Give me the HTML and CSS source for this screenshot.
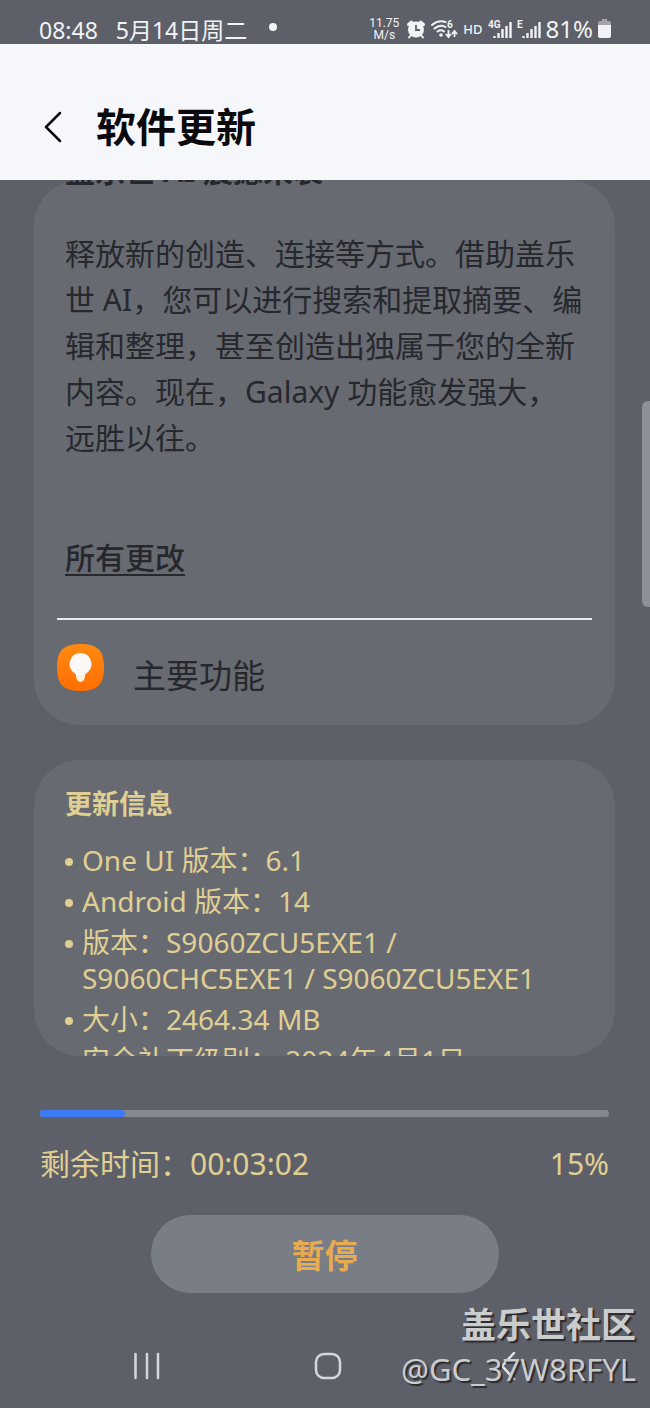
FILE: index.html
```html
<!DOCTYPE html>
<html lang="zh-CN">
<head>
    <meta charset="utf-8">
    <meta name="viewport" content="width=device-width, initial-scale=1">
    <title>软件更新</title>
    <link rel="stylesheet" href="styles.css">
</head>
<body>

    <div class="status-bar">
        <span class="clock">08:48</span>
        <span class="date">5月14日周二</span>
        <span class="dot"></span>
        <div class="status-icons">
            <span class="speed">11.75<br>M/s</span>
            <svg class="alarm" width="20" height="20" viewBox="0 0 20 20">
                <path d="M2.500 5.500L5.500 3M14.500 3l3 2.500" stroke="#f2f3f6" stroke-width="3" stroke-linecap="round"/>
                <path d="M5 16l-2 2.500M15 16l2 2.500" stroke="#f2f3f6" stroke-width="2" stroke-linecap="round"/>
                <circle cx="10" cy="10.500" r="8" fill="#f2f3f6"/>
                <path d="M10 6v5h4" fill="none" stroke="#5d6068" stroke-width="1.800"/>
            </svg>
            <svg class="wifi" width="27" height="24" viewBox="0 0 27 24">
                <g fill="none" stroke="#f2f3f6" stroke-width="2" stroke-linecap="round">
                    <path d="M1 8C5 4.500 10 3.500 14.500 5"/>
                    <path d="M3.500 11.500C7 8.500 11 8 14.500 10"/>
                    <path d="M6.500 14.500C8.500 13 11 13 13 14.500"/>
                </g>
                <path d="M17.500 13v6M15 17l2.500 3 2.500-3M23.500 20v-6M21 17l2.500-3 2.500 3" fill="none" stroke="#f2f3f6" stroke-width="1.800"/>
                <circle cx="10" cy="18" r="1.800" fill="#f2f3f6"/>
                <text class="signal-label" x="16" y="11">6</text>
            </svg>
            <span class="hd">HD</span>
            <svg class="signal" width="24" height="24" viewBox="0 0 24 24">
                <path d="M6.500 19v2M10.500 16v5M14.500 12v9M18.500 9v12M22.500 5v16" stroke="#f2f3f6" stroke-width="2.400"/>
                <text class="signal-label" x="0" y="11">4G</text>
            </svg>
            <svg class="signal" width="24" height="24" viewBox="0 0 24 24">
                <path d="M6.500 19v2M10.500 16v5M14.500 12v9M18.500 9v12M22.500 5v16" stroke="#f2f3f6" stroke-width="2.400"/>
                <text class="signal-label" x="0" y="11">E</text>
            </svg>
            <span class="battery-level">81%</span>
            <svg class="battery" width="13" height="20" viewBox="0 0 13 20">
                <path d="M4 0h5v2h2q2 0 2 2v3H0V4q0-2 2-2h2z" fill="#a3a5aa"/>
                <path d="M0 6h13v11q0 2-2 2H2q-2 0-2-2z" fill="#f2f3f6"/>
            </svg>
        </div>
    </div>

    <header class="header">
        <button class="back" type="button" aria-label="返回">
            <svg width="20" height="32" viewBox="0 0 20 32">
                <path d="M17 2L3 16l14 14" fill="none" stroke="#0a0a0c" stroke-width="2.500" stroke-linecap="round" stroke-linejoin="round"/>
            </svg>
        </button>
        <h1>软件更新</h1>
    </header>

    <main class="content">
        <section class="card features">
            <h2 class="features-title">盖乐世 AI 震撼来袭</h2>
            <p class="description">
                释放新的创造、连接等方式。借助盖乐<br>
                世 AI，您可以进行搜索和提取摘要、编<br>
                辑和整理，甚至创造出独属于您的全新<br>
                内容。现在，Galaxy 功能愈发强大，<br>
                远胜以往。
            </p>
            <h3 class="changes">所有更改</h3>
            <div class="feature-row">
                <svg width="47" height="47" viewBox="0 0 47 47">
                    <defs>
                        <linearGradient id="orange" x1="0" y1="0" x2="0" y2="1">
                            <stop offset="0" stop-color="#ff8a12"/>
                            <stop offset="1" stop-color="#ff6e02"/>
                        </linearGradient>
                    </defs>
                    <path d="M23.500 0C40 0 47 6 47 23.500S40 47 23.500 47 0 41 0 23.500 7 0 23.500 0z" fill="url(#orange)"/>
                    <path d="M19 29h9v3c0 3-2 6-4.500 6S19 35 19 32z" fill="#ffeed8"/>
                    <path d="M23.500 9a11 11 0 0 1 7.500 19c-2 1.500-3 2-3 3.500h-9c0-1.500-1-2-3-3.500A11 11 0 0 1 23.500 9z" fill="#fbf8f5"/>
                </svg>
                <span>主要功能</span>
            </div>
        </section>

        <section class="card info">
            <h2 class="info-title">更新信息</h2>
            <ul class="info-list">
                <li>One UI 版本：6.1</li>
                <li>Android 版本：14</li>
                <li>版本：S9060ZCU5EXE1 /<br>S9060CHC5EXE1 / S9060ZCU5EXE1</li>
                <li>大小：2464.34 MB</li>
                <li>安全补丁级别： 2024年4月1日</li>
            </ul>
        </section>
        <div class="scrollbar"></div>
    </main>

    <footer class="footer">
        <progress class="progress" value="15" max="100" aria-label="更新进度"></progress>
        <div class="progress-text">
            <span>剩余时间：00:03:02</span>
            <span>15%</span>
        </div>
        <button class="pause" type="button">暂停</button>
    </footer>

    <nav class="nav">
        <button type="button" aria-label="最近">
            <svg width="28" height="28" viewBox="0 0 28 28">
                <path d="M2.500 2v24M14 2v24M25 2v24" stroke="#d6d7da" stroke-width="2.500" stroke-linecap="round"/>
            </svg>
        </button>
        <button type="button" aria-label="主屏幕">
            <svg width="28" height="28" viewBox="0 0 28 28">
                <rect x="2" y="2" width="24" height="24" rx="8" fill="none" stroke="#d6d7da" stroke-width="2.500"/>
            </svg>
        </button>
        <button type="button" aria-label="后退">
            <svg width="28" height="28" viewBox="0 0 28 28">
                <path d="M20 1L8 14l12 13" fill="none" stroke="#e4e5e8" stroke-width="2.500" stroke-linecap="round" stroke-linejoin="round"/>
            </svg>
        </button>
    </nav>

    <div class="watermark">
        <strong>盖乐世社区</strong>
        <span>@GC_37W8RFYL</span>
    </div>

</body>
</html>
```
FILE: styles.css
```css
:root {
    --bg: #5d6068;
    --card: #676a71;
    --ink: #26282e;
    --gold: #e0cf93;
    --light: #f2f3f6;
}

* {
    box-sizing: border-box;
}

body {
    position: relative;
    margin: 0;
    background-color: var(--bg);
    font-family: "Noto Sans", "Noto Sans CJK SC", sans-serif;
    color: var(--ink);
}

h1, h2, h3, p, ul {
    margin: 0;
    padding: 0;
}

button {
    border: 0;
    padding: 0;
    background: none;
    font-family: inherit;
}

svg {
    display: block;
}

/* Status bar */
.status-bar {
    display: flex;
    align-items: center;
    height: 44px;
    padding: 16px 39px 0;
    color: var(--light);
    font-size: 23px;
    line-height: 28px;
}

.date {
    margin-left: 18px;
}

.dot {
    width: 8px;
    height: 8px;
    margin: -6px 0 0 22px;
    border-radius: 50%;
    background-color: var(--light);
}

.status-icons {
    display: flex;
    align-items: center;
    gap: 5px;
    margin: -2px 0 0 auto;
}

.speed {
    margin-right: 2px;
    font-family: Roboto, sans-serif;
    font-size: 12px;
    line-height: 12px;
    text-align: center;
}

.hd {
    font-size: 13px;
    font-weight: 500;
}

.signal-label {
    fill: var(--light);
    font-family: Roboto, sans-serif;
    font-size: 10px;
    font-weight: 700;
}

.battery-level {
    font-size: 24px;
}

/* Title bar */
.header {
    display: flex;
    align-items: center;
    gap: 33px;
    height: 136px;
    padding: 30px 43px 0;
    background-color: #f6f7fb;
}

h1 {
    color: #0a0a0c;
    font-size: 40px;
    font-weight: 600;
    line-height: 56px;
}

/* Cards */
.content {
    position: relative;
    display: flex;
    flex-direction: column;
    gap: 35px;
    padding: 0 35px 0 34px;
}

.card {
    overflow: hidden;
    border-radius: 46px;
    background-color: var(--card);
}

.features {
    height: 545px;
    padding: 0 23px;
}

/* Scrolled out under the title bar */
.features-title {
    margin-top: -32px;
    padding-left: 8px;
    font-size: 30px;
    line-height: 46px;
    white-space: nowrap;
}

.description {
    margin-top: 37px;
    padding-left: 8px;
    font-size: 30px;
    line-height: 46px;
    white-space: nowrap;
}

.changes {
    padding: 74px 8px 37px;
    border-bottom: 2px solid #e9eaf0;
    font-size: 30px;
    font-weight: 500;
    line-height: 46px;
    text-decoration: underline;
    text-decoration-thickness: 2px;
    text-underline-offset: 5px;
}

.feature-row {
    display: flex;
    gap: 29px;
    padding-top: 24px;
    font-size: 33px;
    line-height: 64px;
}

.info {
    height: 296px;
    padding: 24px 31px 0;
    color: var(--gold);
}

.info-title {
    font-size: 27px;
    font-weight: 600;
    line-height: 40px;
}

.info-list {
    display: flex;
    flex-direction: column;
    gap: 5px;
    margin-top: 18px;
    list-style: none;
    font-size: 28px;
    line-height: 36px;
    white-space: nowrap;
}

.info-list li {
    display: flex;
    gap: 9px;
}

.info-list li::before {
    content: "";
    flex: none;
    width: 8px;
    height: 8px;
    margin-top: 16px;
    border-radius: 50%;
    background-color: var(--gold);
}

.scrollbar {
    position: absolute;
    top: 221px;
    right: 0;
    width: 8px;
    height: 206px;
    border-radius: 6px 0 0 6px;
    background-color: #8e9097;
}

/* Download progress */
.footer {
    display: flex;
    flex-direction: column;
    padding: 54px 41px 0 40px;
}

.progress {
    appearance: none;
    width: 100%;
    height: 7px;
    border: 0;
}

.progress::-webkit-progress-bar {
    border-radius: 4px;
    background-color: #85888f;
}

.progress::-webkit-progress-value {
    border-radius: 4px;
    background-color: #3c7bf6;
}

.progress-text {
    display: flex;
    justify-content: space-between;
    margin-top: 27px;
    color: var(--gold);
    font-size: 30px;
    line-height: 40px;
}

.pause {
    align-self: center;
    width: 348px;
    height: 78px;
    margin-top: 31px;
    border-radius: 39px;
    background-color: #797e86;
    color: #e9ab50;
    font-size: 33px;
    font-weight: 600;
}

/* System navigation */
.nav {
    display: grid;
    grid-template-columns: repeat(3, 28%);
    justify-content: center;
    height: 115px;
    padding: 59px 0 0 5px;
}

.nav button {
    display: flex;
    justify-content: center;
    height: 28px;
}

.watermark {
    position: absolute;
    right: 14px;
    bottom: 16px;
    display: flex;
    flex-direction: column;
    align-items: flex-end;
    color: #cbccce;
    font-size: 31px;
    line-height: 45px;
    text-shadow: 2px 2px 1px #2b2c30;
}

.watermark strong {
    font-size: 35px;
}
```
